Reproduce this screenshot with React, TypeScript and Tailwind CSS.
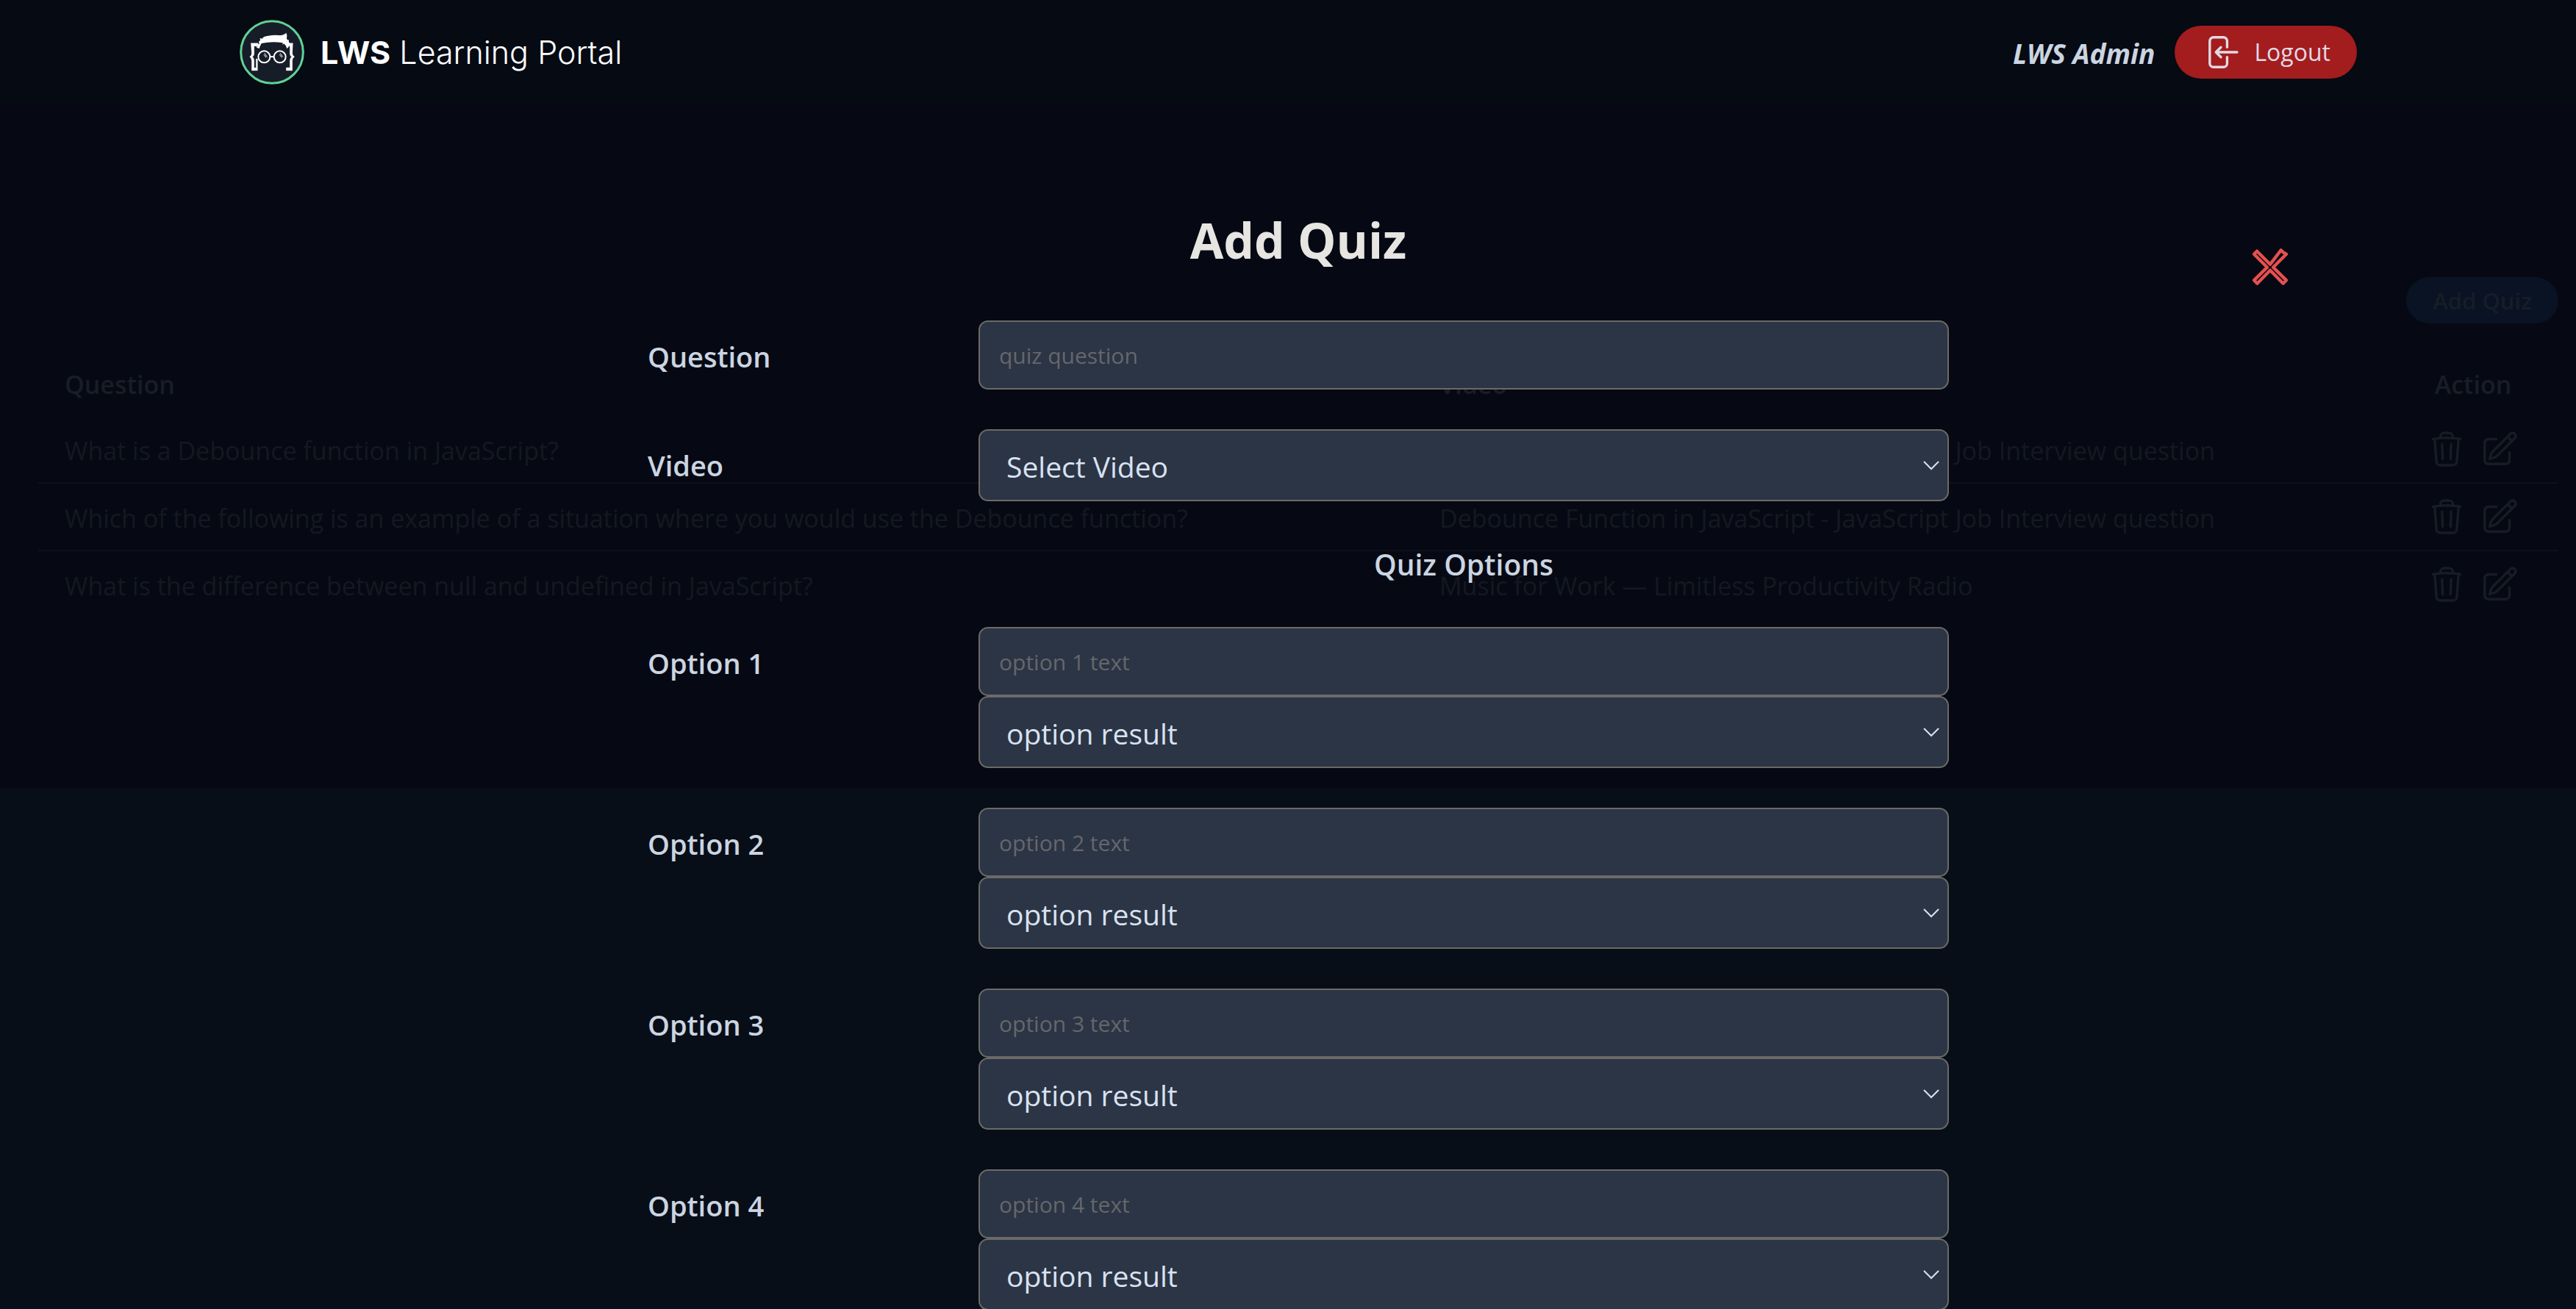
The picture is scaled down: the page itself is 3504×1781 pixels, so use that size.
import React from "react";

const quizzes = [
  {
    question: "What is a Debounce function in JavaScript?",
    video: "Debounce Function in JavaScript - JavaScript Job Interview question",
  },
  {
    question:
      "Which of the following is an example of a situation where you would use the Debounce function?",
    video: "Debounce Function in JavaScript - JavaScript Job Interview question",
  },
  {
    question: "What is the difference between null and undefined in JavaScript?",
    video: "Music for Work — Limitless Productivity Radio",
  },
];

const options = [1, 2, 3, 4];

function LogoMark() {
  return (
    <svg viewBox="17 21 264 264" className="size-[88px]" aria-hidden="true">
      <circle cx="149" cy="153" r="127" fill="#171c29" stroke="#5fd394" strokeWidth="9" />
      <g fill="none" stroke="#fff">
        <path
          d="M63 116 H92 V128 H76 V160 Q76 168 69 172 Q76 177 76 186 V217 H84 V180 H90 V228 H66 V188 Q66 177 58 172 Q66 167 66 158 Z"
          fill="#fff"
          strokeWidth="1"
        />
        <path
          d="M234 116 H208 V128 H222 V160 Q222 168 229 172 Q222 177 222 186 V216 H207 V228 H232 V188 Q232 177 241 172 Q232 167 232 158 Z"
          fill="#fff"
          strokeWidth="1"
        />
        <circle cx="117" cy="172" r="24" strokeWidth="6" />
        <circle cx="181" cy="172" r="24" strokeWidth="6" />
        <path d="M141 173 Q149 169 157 173" strokeWidth="6" />
        <path d="M118 157 l11 15 M116 163 l9 12 M182 157 l11 15 M180 163 l9 12" strokeWidth="3" />
      </g>
      <path
        d="M90 136 L83 131 L91 129 L89 121 L97 120 L95 110 L101 105 L100 97 Q104 94 108 99 Q114 87 134 86 Q156 82 176 84 Q196 85 207 74 L210 84 L209 98 L214 104 L217 101 L218 112 L222 118 L216 133 L210 138 Q206 124 197 118 L192 123 L193 115 Q150 108 106 117 Q100 128 97 138 Z"
        fill="#fff"
      />
    </svg>
  );
}

function LogoutIcon() {
  return (
    <svg viewBox="0 0 24 24" fill="none" stroke="currentColor" strokeWidth="1.5" strokeLinecap="round" strokeLinejoin="round" className="size-[54px]" aria-hidden="true">
      <path d="M15.75 9V5.25A2.25 2.25 0 0013.5 3h-6a2.25 2.25 0 00-2.25 2.25v13.5A2.25 2.25 0 007.5 21h6a2.25 2.25 0 002.25-2.25V15M12 9l-3 3m0 0l3 3m-3-3h12.75" />
    </svg>
  );
}

function TrashIcon() {
  return (
    <svg viewBox="0 0 24 24" fill="none" stroke="currentColor" strokeWidth="1.5" strokeLinecap="round" strokeLinejoin="round" className="size-[54px]" aria-hidden="true">
      <path d="M14.74 9l-.346 9m-4.788 0L9.26 9m9.968-3.21c.342.052.682.107 1.022.166m-1.022-.165L18.16 19.673a2.25 2.25 0 01-2.244 2.077H8.084a2.25 2.25 0 01-2.244-2.077L4.772 5.79m14.456 0a48.108 48.108 0 00-3.478-.397m-12 .562c.34-.059.68-.114 1.022-.165m0 0a48.11 48.11 0 013.478-.397m7.5 0v-.916c0-1.18-.91-2.164-2.09-2.201a51.964 51.964 0 00-3.32 0c-1.18.037-2.09 1.022-2.09 2.201v.916m7.5 0a48.667 48.667 0 00-7.5 0" />
    </svg>
  );
}

function EditIcon() {
  return (
    <svg viewBox="0 0 24 24" fill="none" stroke="currentColor" strokeWidth="1.5" strokeLinecap="round" strokeLinejoin="round" className="size-[54px]" aria-hidden="true">
      <path d="M16.862 4.487l1.687-1.688a1.875 1.875 0 112.652 2.652L10.582 16.07a4.5 4.5 0 01-1.897 1.13L6 18l.8-2.685a4.5 4.5 0 011.13-1.897l8.932-8.931zm0 0L19.5 7.125M18 14v4.75A2.25 2.25 0 0115.75 21H5.25A2.25 2.25 0 013 18.75V8.25A2.25 2.25 0 015.25 6H10" />
    </svg>
  );
}

function CloseIcon() {
  return (
    <svg viewBox="245 112 156 156" fill="none" stroke="#e5504f" strokeWidth="13" strokeLinejoin="round" className="size-[52px]" aria-hidden="true">
      <path d="M257 138 L269 126 L323 180 L367 122 L376 131 L389 138 L335 192 L389 245 L376 258 L323 204 L270 258 L257 245 L311 192 Z" />
    </svg>
  );
}

function SelectField({ id, label, text }: { id: string; label?: string; text: string }) {
  return (
    <div className="relative">
      <select
        id={id}
        aria-label={label}
        className="block h-[98px] w-full appearance-none rounded-[13px] border-2 border-[#6b6a66] bg-[#2c3545] px-9 pt-1 text-[39px] text-[#d8e2f2]"
      >
        <option>{text}</option>
      </select>
      <svg
        viewBox="0 0 24 14"
        fill="none"
        stroke="#d8e2f2"
        strokeWidth="2"
        className="pointer-events-none absolute right-3 top-1/2 h-[14px] w-6 -translate-y-1/2"
        aria-hidden="true"
      >
        <path d="M2 2 L12 12 L22 2" />
      </svg>
    </div>
  );
}

function TextField({ id, placeholder }: { id: string; placeholder: string }) {
  return (
    <input
      id={id}
      type="text"
      placeholder={placeholder}
      className="block h-[94px] w-full rounded-[13px] border-2 border-[#6b6a66] bg-[#2c3545] px-[26px] text-[30px] text-[#d8e2f2] placeholder:text-[#65676b]"
    />
  );
}

const labelStyle = "flex h-[94px] items-center pt-1 text-[38px] font-semibold";

export default function App() {
  return (
    <div className="relative flex h-screen flex-col overflow-hidden bg-[#080e17] font-['Open_Sans',sans-serif] text-[#cbd5e1]">
      <header className="bg-[#050a13] py-[27px] pl-7">
        <div className="mx-auto flex max-w-[2880px] items-center justify-between">
          <a href="#" className="flex items-center gap-[22px] font-['Inter',sans-serif] text-[43px] leading-[54px] text-white">
            <LogoMark />
            <span>
              <b className="font-bold">LWS</b> <span className="font-light">Learning Portal</span>
            </span>
          </a>
          <div className="flex items-center gap-[27px]">
            <span className="pt-1 text-[37px] leading-[54px] font-bold italic">LWS Admin</span>
            <button type="button" className="flex h-[72px] items-center gap-[18px] rounded-full bg-[#a31c1e] px-9 text-[32px] font-medium text-[#e2d9e4]">
              <LogoutIcon />
              Logout
            </button>
          </div>
        </div>
      </header>

      <main className="min-h-[931px] bg-[#060913] pt-[235px] pr-6 pl-[52px] text-[34px] leading-[54px] text-[#151821]">
        <div className="flex justify-end">
          <button type="button" className="h-[63px] rounded-full bg-[#091323] px-9 text-[31px] font-semibold text-[#171d28]">
            Add Quiz
          </button>
        </div>
        <table className="mt-9 w-full table-fixed border-collapse text-left">
          <thead>
            <tr className="text-[#191d26]">
              <th className="w-[1870px] px-9 pt-5 pb-4 font-semibold">Question</th>
              <th className="px-9 pt-5 pb-4 font-semibold">Video</th>
              <th className="w-[214px] pt-5 pr-[18px] pb-4 text-center font-semibold">Action</th>
            </tr>
          </thead>
          <tbody>
            {quizzes.map((quiz) => (
              <tr key={quiz.question} className="border-b-2 border-[#0d111a] last:border-0">
                <td className="px-9 pt-5 pb-4">{quiz.question}</td>
                <td className="px-9 pt-5 pb-4">{quiz.video}</td>
                <td className="py-[18px] pr-[18px]">
                  <div className="flex justify-center gap-[18px] text-[#181c25]">
                    <button type="button" aria-label="Delete quiz">
                      <TrashIcon />
                    </button>
                    <button type="button" aria-label="Edit quiz">
                      <EditIcon />
                    </button>
                  </div>
                </td>
              </tr>
            ))}
          </tbody>
        </table>
      </main>

      <div role="dialog" aria-labelledby="dialog-title" className="absolute inset-x-0 top-[142px] pl-7">
        <div className="relative mx-auto max-w-[2704px] pt-36">
          <button type="button" aria-label="Close" className="absolute top-[195px] right-1">
            <CloseIcon />
          </button>
          <h1 id="dialog-title" className="text-center text-[66px] leading-[80px] font-bold text-[#e7e5e2]">
            Add Quiz
          </h1>
          <form className="mx-auto mt-[70px] grid max-w-[1770px] grid-cols-4 items-start gap-x-[30px] gap-y-[54px] text-[39px]">
            <label htmlFor="question" className={labelStyle}>
              Question
            </label>
            <div className="col-span-3">
              <TextField id="question" placeholder="quiz question" />
            </div>

            <label htmlFor="video" className={labelStyle}>
              Video
            </label>
            <div className="col-span-3">
              <SelectField id="video" text="Select Video" />
            </div>

            <h2 className="col-span-3 col-start-2 text-center leading-[63px] font-semibold">Quiz Options</h2>

            {options.map((n) => (
              <React.Fragment key={n}>
                <label htmlFor={`option-${n}`} className={labelStyle}>
                  Option {n}
                </label>
                <div className="col-span-3">
                  <TextField id={`option-${n}`} placeholder={`option ${n} text`} />
                  <SelectField id={`result-${n}`} label={`Option ${n} result`} text="option result" />
                </div>
              </React.Fragment>
            ))}
          </form>
        </div>
      </div>
    </div>
  );
}
